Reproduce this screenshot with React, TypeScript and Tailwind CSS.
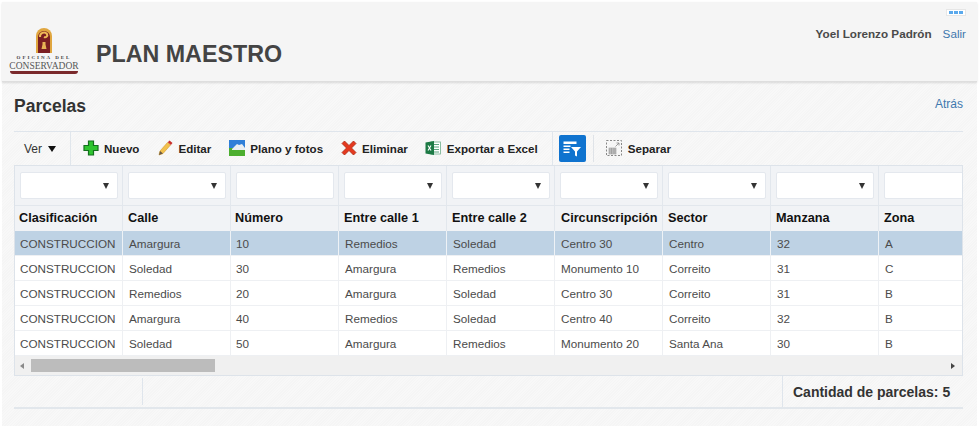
import React from "react";

const font = "font-['Liberation_Sans',Arial,sans-serif]";

const columns = [
  { title: "Clasificación", head: "pl-[4px]", cell: "pl-[5px]", select: true },
  { title: "Calle", head: "pl-[5px]", cell: "pl-[6px]", select: true },
  { title: "Número", head: "pl-[4px]", cell: "pl-[5px]", select: false },
  { title: "Entre calle 1", head: "pl-[5px]", cell: "pl-[6px]", select: true },
  { title: "Entre calle 2", head: "pl-[5px]", cell: "pl-[6px]", select: true },
  { title: "Circunscripción", head: "pl-[6px]", cell: "pl-[6px]", select: true },
  { title: "Sector", head: "pl-[5px]", cell: "pl-[6px]", select: true },
  { title: "Manzana", head: "pl-[5px]", cell: "pl-[6px]", select: true },
  { title: "Zona", head: "pl-[5px]", cell: "pl-[6px]", select: false },
];

const rows = [
  ["CONSTRUCCION", "Amargura", "10", "Remedios", "Soledad", "Centro 30", "Centro", "32", "A"],
  ["CONSTRUCCION", "Soledad", "30", "Amargura", "Remedios", "Monumento 10", "Correito", "31", "C"],
  ["CONSTRUCCION", "Remedios", "20", "Amargura", "Soledad", "Centro 30", "Correito", "31", "B"],
  ["CONSTRUCCION", "Amargura", "40", "Remedios", "Soledad", "Centro 40", "Correito", "32", "B"],
  ["CONSTRUCCION", "Soledad", "50", "Amargura", "Remedios", "Monumento 20", "Santa Ana", "30", "B"],
];

function Logo() {
  return (
    <div className="flex flex-col items-center w-[70px] ml-[7px] mb-[7px]">
      <svg width="18" height="27" viewBox="0 0 18 27">
        <path d="M1 26V9a8 8 0 0 1 16 0v17z" fill="#e0a63f" />
        <path d="M3 26V10a6 6 0 0 1 12 0v16z" fill="#7b1f22" />
        <path d="M5 10a4 4 0 0 1 7-3c1 2-1 4-3 3" fill="none" stroke="#f0bd58" strokeWidth="2" />
        <path d="M7.500 15h3v2.500l1 4.500h-5l1-4.500z" fill="#e8b455" />
      </svg>
      <div className="font-['Liberation_Serif',serif] text-[5px] leading-[6px] font-bold tracking-[2px] text-[#444] mt-px whitespace-nowrap">
        OFICINA DEL
      </div>
      <div className="font-['Liberation_Serif',serif] text-[9.500px] leading-[10px] text-[#555] whitespace-nowrap">
        CONSERVADOR
      </div>
      <div className="w-[68px] h-[3px] rounded-b-full bg-[#7b2a2c]" />
    </div>
  );
}

function PlusIcon() {
  return (
    <svg width="16" height="16" viewBox="0 0 16 16">
      <path d="M5.500 1h5v4.500H15v5h-4.500V15h-5v-4.500H1v-5h4.500z" fill="#2fc42f" stroke="#14701e" strokeWidth="1.200" />
    </svg>
  );
}

function PencilIcon() {
  return (
    <svg width="16" height="16" viewBox="0 0 16 16">
      <path d="M1 15l1-4 7.500-8.500 3 2.500L5 13.500z" fill="#f2c14e" stroke="#d49a2a" strokeWidth="0.600" />
      <path d="M9.800 2.200l1.700-1.700 3 2.500-1.600 2z" fill="#c9302c" />
      <path d="M1 15l1-4 3 2.500z" fill="#6b5a45" />
    </svg>
  );
}

function PictureIcon() {
  return (
    <svg width="16" height="16" viewBox="0 0 16 16">
      <rect width="16" height="8" fill="#2f7fd8" />
      <rect y="8" width="16" height="8" fill="#4cae2f" />
      <path d="M3 9l3-3 2-2 2 1 3-1 3 4v2H3z" fill="#e9eef2" />
    </svg>
  );
}

function CrossIcon() {
  return (
    <svg width="16" height="16" viewBox="0 0 16 16">
      <path d="M1 3.500L3.500 1 8 5.500 12.500 1 15 3.500 10.500 8 15 12.500 12.500 15 8 10.500 3.500 15 1 12.500 5.500 8z" fill="#e5391f" stroke="#a82a12" strokeWidth="0.800" />
    </svg>
  );
}

function ExcelIcon() {
  return (
    <svg width="16" height="16" viewBox="0 0 16 16">
      <rect x="6" y="2" width="9.500" height="12" fill="#fff" stroke="#6fae8c" strokeWidth="0.800" />
      <path d="M9 4.500h5M9 7h5M9 9.500h5M9 12h5" stroke="#5ba37e" strokeWidth="1" />
      <path d="M0.500 2.500L9 1v14L0.500 13.500z" fill="#1d7a45" />
      <path d="M3 5.500l3 5M6 5.500l-3 5" stroke="#fff" strokeWidth="1.100" />
    </svg>
  );
}

function FilterIcon() {
  return (
    <svg width="18" height="16" viewBox="0 0 18 16">
      <path d="M0.500 0.500h13v2.500h-13zM0.500 4.500h7v1.500h-7zM0.500 7.500h6v1.500h-6zM0.500 10.500h6v1.500h-6z" fill="#fff" />
      <path d="M8 6h10l-4 4.500v5l-2-1v-4z" fill="#fff" />
    </svg>
  );
}

function DetachIcon() {
  return (
    <svg width="16" height="16" viewBox="0 0 16 16">
      <rect x="0.500" y="0.500" width="15" height="15" fill="none" stroke="#888" strokeDasharray="2 1.500" />
      <rect x="3" y="8" width="7" height="6" fill="#c9c9c9" stroke="#888" strokeWidth="0.500" />
      <path d="M3 10h7M3 12h7M5.500 8v6M8 8v6" stroke="#888" strokeWidth="0.500" />
      <path d="M9.500 6.500l3.500-3.500M10.500 3H13v2.500" fill="none" stroke="#888" strokeWidth="0.800" />
    </svg>
  );
}

function Action({ icon, label, gap }: { icon: React.ReactNode; label: string; gap: string }) {
  return (
    <div className={`flex items-center ${gap} text-[11.600px] font-bold text-[#222] whitespace-nowrap`}>
      {icon}
      <span>{label}</span>
    </div>
  );
}

function FilterField({ select }: { select: boolean }) {
  return (
    <div className="h-[27px] w-[98px] shrink-0 bg-white border border-[#e4e8ee] rounded-[2px] flex items-center justify-end pr-[8px]">
      {select && <span className="w-0 h-0 border-x-[3.500px] border-x-transparent border-t-[6px] border-t-[#333]" />}
    </div>
  );
}

export default function App() {
  return (
    <div className={`${font} w-[979px] h-[426px] overflow-hidden bg-white px-[2px] pt-[2px]`}>
      <div className="w-[975px] h-[424px] flex flex-col bg-[repeating-linear-gradient(135deg,#f8f8f8_0,#f8f8f8_1px,#f5f5f5_1px,#f5f5f5_2px)]">
        {/* Header */}
        <header className="relative h-[80px] shrink-0 bg-[#f5f5f5] border-b border-[#dedede] shadow-[0_1px_2px_rgba(0,0,0,0.12)] flex items-end">
          <Logo />
          <h1 className="ml-[17px] mb-[13px] text-[23.250px] leading-[28px] font-bold text-[#444]">PLAN MAESTRO</h1>
          <div className="ml-auto self-start flex flex-col items-end pr-[11px] pt-[7px]">
            <div className="w-[20px] h-[7px] bg-white border border-[#e6e6e6] flex items-center justify-center gap-px">
              <span className="w-[4px] h-[3px] bg-[#5aa9ec]" />
              <span className="w-[4px] h-[3px] bg-[#5aa9ec]" />
              <span className="w-[4px] h-[3px] bg-[#5aa9ec]" />
            </div>
            <div className="flex items-baseline gap-[11px] mt-[11px]">
              <span className="text-[11.700px] leading-[14px] font-bold text-[#4a4a4a]">Yoel Lorenzo Padrón</span>
              <span className="text-[11.700px] leading-[14px] text-[#3f78ae]">Salir</span>
            </div>
          </div>
        </header>

        <main className="flex-1 flex flex-col pl-[12px] pr-[14px]">
          {/* Title */}
          <div className="h-[50px] shrink-0 border-b border-[#dfe5ec] flex items-start justify-between">
            <h2 className="mt-[14px] text-[17.500px] leading-[20px] font-bold text-[#333]">Parcelas</h2>
            <a className="mt-[15px] text-[12px] leading-[14px] text-[#3f78ae]">Atrás</a>
          </div>

          {/* Toolbar */}
          <div className="h-[33px] shrink-0 flex items-center">
            <div className="h-full w-[57px] shrink-0 border-r border-[#e0e6ec] flex items-center pl-[10px] gap-[6px] text-[12px] text-[#333]">
              <span>Ver</span>
              <span className="w-0 h-0 border-x-[4.500px] border-x-transparent border-t-[6px] border-t-[#111]" />
            </div>
            <div className="ml-[12px]"><Action icon={<PlusIcon />} label="Nuevo" gap="gap-[5px]" /></div>
            <div className="ml-[19px]"><Action icon={<PencilIcon />} label="Editar" gap="gap-[4px]" /></div>
            <div className="ml-[18px]"><Action icon={<PictureIcon />} label="Plano y fotos" gap="gap-[5px]" /></div>
            <div className="ml-[18px]"><Action icon={<CrossIcon />} label="Eliminar" gap="gap-[5px]" /></div>
            <div className="ml-[17px]"><Action icon={<ExcelIcon />} label="Exportar a Excel" gap="gap-[6px]" /></div>
            <div className="h-full ml-[14px] border-l border-[#e0e6ec]" />
            <div className="ml-[6px] w-[27px] h-[27px] rounded-[2px] bg-[#0f73cf] flex items-center justify-center">
              <FilterIcon />
            </div>
            <div className="h-[27px] ml-[7px] border-l border-[#dfe3e8]" />
            <div className="ml-[12px]"><Action icon={<DetachIcon />} label="Separar" gap="gap-[6px]" /></div>
          </div>

          {/* Table */}
          <div className="w-[949px] h-[211px] shrink-0 overflow-hidden border border-[#dde3ea] flex flex-col bg-white">
            <div className="flex h-[40px] shrink-0 bg-[#f1f3f6] border-b border-[#e2e7ed]">
              {columns.map((c) => (
                <div key={c.title} className="w-[108px] shrink-0 border-r border-[#e2e7ed] flex items-center pl-[5px]">
                  <FilterField select={c.select} />
                </div>
              ))}
            </div>
            <div className="flex h-[25px] shrink-0 bg-[#f1f3f6]">
              {columns.map((c) => (
                <div key={c.title} className={`w-[108px] shrink-0 border-r border-[#e2e7ed] flex items-center ${c.head} text-[12.700px] font-bold text-[#111] whitespace-nowrap`}>
                  {c.title}
                </div>
              ))}
            </div>
            {rows.map((r, i) => (
              <div key={i} className={`flex h-[25px] shrink-0 border-b border-[#eef0f3] ${i === 0 ? "bg-[#bed2e4]" : "bg-white"}`}>
                {r.map((v, j) => (
                  <div
                    key={j}
                    className={`w-[108px] shrink-0 border-r flex items-center pt-[2px] ${columns[j].cell} text-[11.700px] text-[#4b4b4b] whitespace-nowrap ${i === 0 ? "border-[#eef2f6]" : "border-[#eef0f3]"}`}
                  >
                    {v}
                  </div>
                ))}
              </div>
            ))}
            {/* Scrollbar */}
            <div className="flex-1 bg-[#f0f0f0] flex items-center pl-[5px] pr-[7px]">
              <span className="w-0 h-0 border-y-[3.500px] border-y-transparent border-r-[4px] border-r-[#8a8a8a]" />
              <div className="ml-[7px] w-[184px] h-[13px] bg-[#bcbcbc]" />
              <span className="ml-auto w-0 h-0 border-y-[3.500px] border-y-transparent border-l-[4px] border-l-[#444]" />
            </div>
          </div>

          {/* Footer */}
          <div className="w-[949px] h-[33px] shrink-0 border-b-2 border-[#e2e7ec] flex">
            <div className="w-[129px] shrink-0 border-r border-[#dfe5ec] my-[2px]" />
            <div className="flex-1 border-r border-[#dfe5ec]" />
            <div className="w-[180px] shrink-0 flex items-center pl-[10px] pt-[1px] text-[14px] font-bold text-[#333] whitespace-nowrap">
              Cantidad de parcelas: 5
            </div>
          </div>
        </main>
      </div>
    </div>
  );
}
